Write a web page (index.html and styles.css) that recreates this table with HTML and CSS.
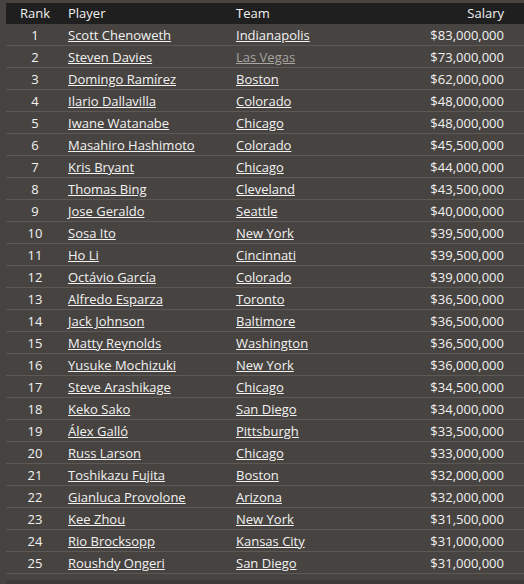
FILE: index.html
```html
<!DOCTYPE html>
<html>
<head>
<meta charset="utf-8">
<link rel="stylesheet" href="styles.css">
</head>
<body>
<table class="salaries">
<colgroup><col class="c-rank"><col class="c-player"><col class="c-team"><col class="c-salary"></colgroup>
<thead>
<tr><th class="rank">Rank</th><th class="player">Player</th><th class="team">Team</th><th class="salary">Salary</th></tr>
</thead>
<tbody>
<tr><td class="rank">1</td><td class="player"><a href="#">Scott Chenoweth</a></td><td class="team"><a href="#">Indianapolis</a></td><td class="salary">$83,000,000</td></tr>
<tr><td class="rank">2</td><td class="player"><a href="#">Steven Davies</a></td><td class="team"><a href="#" class="visited">Las Vegas</a></td><td class="salary">$73,000,000</td></tr>
<tr><td class="rank">3</td><td class="player"><a href="#">Domingo Ramírez</a></td><td class="team"><a href="#">Boston</a></td><td class="salary">$62,000,000</td></tr>
<tr><td class="rank">4</td><td class="player"><a href="#">Ilario Dallavilla</a></td><td class="team"><a href="#">Colorado</a></td><td class="salary">$48,000,000</td></tr>
<tr><td class="rank">5</td><td class="player"><a href="#">Iwane Watanabe</a></td><td class="team"><a href="#">Chicago</a></td><td class="salary">$48,000,000</td></tr>
<tr><td class="rank">6</td><td class="player"><a href="#">Masahiro Hashimoto</a></td><td class="team"><a href="#">Colorado</a></td><td class="salary">$45,500,000</td></tr>
<tr><td class="rank">7</td><td class="player"><a href="#">Kris Bryant</a></td><td class="team"><a href="#">Chicago</a></td><td class="salary">$44,000,000</td></tr>
<tr><td class="rank">8</td><td class="player"><a href="#">Thomas Bing</a></td><td class="team"><a href="#">Cleveland</a></td><td class="salary">$43,500,000</td></tr>
<tr><td class="rank">9</td><td class="player"><a href="#">Jose Geraldo</a></td><td class="team"><a href="#">Seattle</a></td><td class="salary">$40,000,000</td></tr>
<tr><td class="rank">10</td><td class="player"><a href="#">Sosa Ito</a></td><td class="team"><a href="#">New York</a></td><td class="salary">$39,500,000</td></tr>
<tr><td class="rank">11</td><td class="player"><a href="#">Ho Li</a></td><td class="team"><a href="#">Cincinnati</a></td><td class="salary">$39,500,000</td></tr>
<tr><td class="rank">12</td><td class="player"><a href="#">Octávio García</a></td><td class="team"><a href="#">Colorado</a></td><td class="salary">$39,000,000</td></tr>
<tr><td class="rank">13</td><td class="player"><a href="#">Alfredo Esparza</a></td><td class="team"><a href="#">Toronto</a></td><td class="salary">$36,500,000</td></tr>
<tr><td class="rank">14</td><td class="player"><a href="#">Jack Johnson</a></td><td class="team"><a href="#">Baltimore</a></td><td class="salary">$36,500,000</td></tr>
<tr><td class="rank">15</td><td class="player"><a href="#">Matty Reynolds</a></td><td class="team"><a href="#">Washington</a></td><td class="salary">$36,500,000</td></tr>
<tr><td class="rank">16</td><td class="player"><a href="#">Yusuke Mochizuki</a></td><td class="team"><a href="#">New York</a></td><td class="salary">$36,000,000</td></tr>
<tr><td class="rank">17</td><td class="player"><a href="#">Steve Arashikage</a></td><td class="team"><a href="#">Chicago</a></td><td class="salary">$34,500,000</td></tr>
<tr><td class="rank">18</td><td class="player"><a href="#">Keko Sako</a></td><td class="team"><a href="#">San Diego</a></td><td class="salary">$34,000,000</td></tr>
<tr><td class="rank">19</td><td class="player"><a href="#">Álex Galló</a></td><td class="team"><a href="#">Pittsburgh</a></td><td class="salary">$33,500,000</td></tr>
<tr><td class="rank">20</td><td class="player"><a href="#">Russ Larson</a></td><td class="team"><a href="#">Chicago</a></td><td class="salary">$33,000,000</td></tr>
<tr><td class="rank">21</td><td class="player"><a href="#">Toshikazu Fujita</a></td><td class="team"><a href="#">Boston</a></td><td class="salary">$32,000,000</td></tr>
<tr><td class="rank">22</td><td class="player"><a href="#">Gianluca Provolone</a></td><td class="team"><a href="#">Arizona</a></td><td class="salary">$32,000,000</td></tr>
<tr><td class="rank">23</td><td class="player"><a href="#">Kee Zhou</a></td><td class="team"><a href="#">New York</a></td><td class="salary">$31,500,000</td></tr>
<tr><td class="rank">24</td><td class="player"><a href="#">Rio Brocksopp</a></td><td class="team"><a href="#">Kansas City</a></td><td class="salary">$31,000,000</td></tr>
<tr><td class="rank">25</td><td class="player"><a href="#">Roushdy Ongeri</a></td><td class="team"><a href="#">San Diego</a></td><td class="salary">$31,000,000</td></tr>
</tbody>
</table>
<div class="footer-band"></div>
</body>
</html>
```
FILE: styles.css
```css
html, body {
  margin: 0;
  padding: 0;
  background: #474340;
}
body {
  padding: 3px 0 0 6px;
  font-family: "Open Sans", "Noto Sans", sans-serif;
  font-size: 13px;
  color: #f2f2f2;
}
.salaries {
  width: 518px;
  border-collapse: collapse;
  table-layout: fixed;
}
.c-rank { width: 58px; }
.c-player { width: 168px; }
.c-team { width: 150px; }
.c-salary { width: 142px; }
.salaries th {
  background: #201f1f;
  font-weight: normal;
  height: 21px;
  padding: 0;
  line-height: 21px;
  text-align: left;
}
.salaries td {
  height: 20px;
  padding: 1px 0 0;
  line-height: 20px;
  border-bottom: 1px solid #5b5856;
}
.salaries .rank { text-align: center; }
.salaries .player { padding-left: 4px; }
.salaries .team { padding-left: 4px; }
.salaries .salary { text-align: right; padding-right: 20px; }
.salaries a {
  color: #f2f2f2;
  text-decoration: underline;
}
.salaries a.visited {
  color: #a8a5a2;
}
.footer-band {
  margin-top: 6px;
  height: 10px;
  background: #3d3a38;
}
```
